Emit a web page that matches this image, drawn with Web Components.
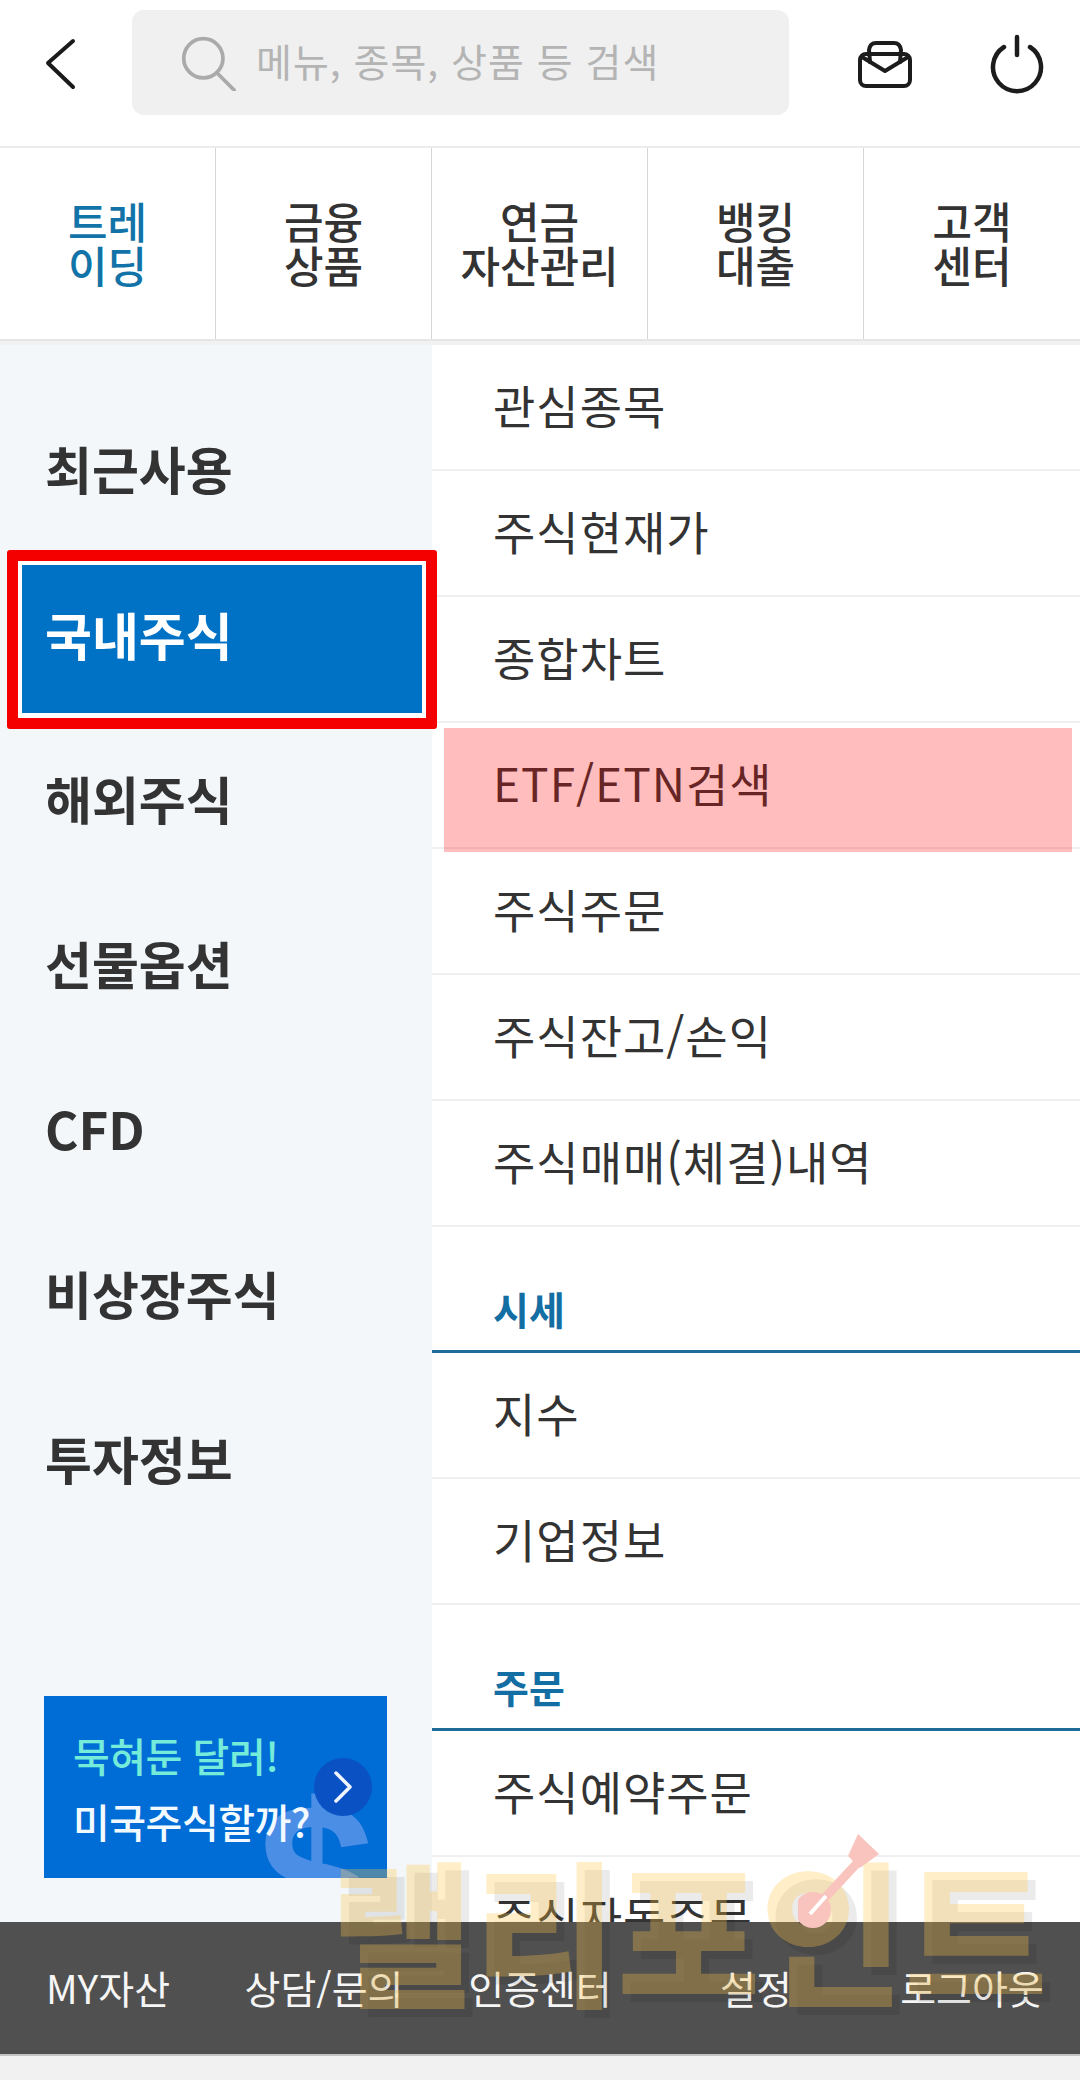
<!DOCTYPE html>
<html lang="ko">
<head>
<meta charset="utf-8">
<title>메뉴</title>
<style>
  html, body { margin: 0; background: #fff; }
  body { font-family: "Noto Sans CJK KR", "Noto Sans", sans-serif; color: #333; }
</style>
</head>
<body>
<menu-page></menu-page>

<script>
class TopHeader extends HTMLElement {
  constructor() {
    super();
    this.attachShadow({ mode: "open" });
    this.shadowRoot.innerHTML = /* html */`
    <style>
      :host { display: flex; align-items: flex-start; height: 146px; box-sizing: border-box; padding: 10px 0 0 40px; }
      svg { display: block; fill: none; stroke-linecap: round; stroke-linejoin: round; }
      .back { width: 40px; height: 60px; margin: 25px 52px 0 0; stroke: #1a1a1a; stroke-width: 4; }
      .search { width: 657px; height: 105px; flex: none; background: #f0f0f0; border-radius: 12px; display: flex; align-items: center; box-sizing: border-box; padding: 0 0 0 48px; color: #b4b4b4; font-size: 39px; letter-spacing: 1px; }
      .search span { position: relative; top: -3px; }
      .search svg { width: 56px; height: 56px; margin-right: 20px; stroke: #aaa; stroke-width: 4; }
      .mail { width: 60px; height: 60px; margin: 23px 0 0 65px; stroke: #1c1c1c; stroke-width: 4; }
      .power { width: 60px; height: 64px; margin: 21px 0 0 73px; stroke: #1c1c1c; stroke-width: 4.5; }
    </style>
    <svg class="back" viewBox="0 0 40 60"><path d="M33 6 L8 28 L33 52"/></svg>
    <div class="search">
      <svg viewBox="0 0 60 60"><circle cx="25" cy="25" r="21"/><path d="M40 41 L58 59"/></svg>
      <span>메뉴, 종목, 상품 등 검색</span>
    </div>
    <svg class="mail" viewBox="0 0 60 60"><rect x="6" y="21" width="50" height="32" rx="6"/><path d="M8 24 L31 38 L54 24"/><path d="M16 29 L15 17 Q16 10 22 10 L40 10 Q46 10 47 17 L46 29"/></svg>
    <svg class="power" viewBox="0 0 60 64"><path d="M17 16 A24 24 0 1 0 43 16"/><path d="M30 6 L30 24"/></svg>`;
  }
}

class TabBar extends HTMLElement {
  constructor() {
    super();
    this.attachShadow({ mode: "open" });
    this.shadowRoot.innerHTML = /* html */`
    <style>
      :host { display: grid; grid-template-columns: repeat(5, 1fr); height: 195px; box-sizing: border-box; border-top: 2px solid #ececec; border-bottom: 2px solid #e6e6e6; }
    </style>
    <slot></slot>`;
  }
}

class TabItem extends HTMLElement {
  constructor() {
    super();
    this.attachShadow({ mode: "open" });
    this.shadowRoot.innerHTML = /* html */`
    <style>
      :host { display: flex; align-items: center; justify-content: center; text-align: center; font-size: 43px; line-height: 44px; font-weight: 500; color: #333; border-right: 1px solid #d6d6d6; padding-bottom: 4px; }
      :host(:last-child) { border-right: 0; }
      :host([active]) { color: #1273a8; }
    </style>
    <div><slot></slot></div>`;
  }
}

class SideNav extends HTMLElement {
  constructor() {
    super();
    this.attachShadow({ mode: "open" });
    this.shadowRoot.innerHTML = /* html */`
    <style>
      :host { display: flex; flex-direction: column; width: 432px; flex: none; background: #f3f7fa; padding-top: 40px; box-sizing: border-box; }
      ::slotted(promo-banner) { margin: auto 0 44px 44px; }
    </style>
    <slot></slot>`;
  }
}

class SideItem extends HTMLElement {
  constructor() {
    super();
    this.attachShadow({ mode: "open" });
    this.shadowRoot.innerHTML = /* html */`
    <style>
      :host { display: block; height: 165px; flex: none; font-size: 51px; font-weight: 700; color: #333; }
      .box { height: 100%; box-sizing: border-box; padding-left: 45px; display: flex; align-items: center; }
      :host([active]) { color: #fff; }
      :host([active]) .box { margin: 0 10px 0 22px; height: 148px; position: relative; top: 15px; padding: 0 0 10px 23px; background: #0072c6; box-shadow: 0 0 0 5px #fff; }
    </style>
    <div class="box"><slot></slot></div>`;
  }
}

class PromoBanner extends HTMLElement {
  constructor() {
    super();
    this.attachShadow({ mode: "open" });
    this.shadowRoot.innerHTML = /* html */`
    <style>
      :host { display: block; position: relative; width: 343px; height: 182px; flex: none; overflow: hidden; background: #006cd6; box-sizing: border-box; padding: 26px 0 0 29px; font-weight: 500; }
      .dollar { position: absolute; left: 214px; top: 76px; font: 700 210px/210px "Liberation Sans", sans-serif; color: #4a8ee6; }
      .line { position: relative; font-size: 40px; line-height: 66px; white-space: nowrap; letter-spacing: -0.5px; }
      .mint { color: #74ecd9; }
      .white { color: #f2faff; }
      .go { position: absolute; left: 270px; top: 62px; width: 58px; height: 58px; border-radius: 50%; background: #0a52c4; display: flex; align-items: center; justify-content: center; }
      .go svg { width: 20px; height: 34px; fill: none; stroke: #f2f6ff; stroke-width: 3.5; stroke-linecap: round; stroke-linejoin: round; }
    </style>
    <span class="dollar">$</span>
    <div class="line mint"><slot name="top"></slot></div>
    <div class="line white"><slot name="bottom"></slot></div>
    <div class="go"><svg viewBox="0 0 20 34"><path d="M3 3 L17 17 L3 31"/></svg></div>`;
  }
}

class MenuRow extends HTMLElement {
  constructor() {
    super();
    this.attachShadow({ mode: "open" });
    this.shadowRoot.innerHTML = /* html */`
    <style>
      :host { display: flex; align-items: center; height: 126px; flex: none; box-sizing: border-box; padding: 0 0 6px 61px; border-bottom: 2px solid #efefef; font-size: 46px; color: #333; letter-spacing: 1px; }
    </style>
    <slot></slot>`;
  }
}

class MenuSection extends HTMLElement {
  constructor() {
    super();
    this.attachShadow({ mode: "open" });
    this.shadowRoot.innerHTML = /* html */`
    <style>
      :host { display: flex; align-items: flex-end; height: 126px; flex: none; box-sizing: border-box; padding: 0 0 20px 61px; border-bottom: 3px solid #1d6b98; font-size: 39px; line-height: 44px; font-weight: 700; color: #136ea3; }
    </style>
    <slot></slot>`;
  }
}

class MenuList extends HTMLElement {
  constructor() {
    super();
    this.attachShadow({ mode: "open" });
    this.shadowRoot.innerHTML = /* html */`
    <style>
      :host { display: flex; flex-direction: column; flex: 1; min-width: 0; overflow: hidden; }
    </style>
    <slot></slot>`;
  }
}

class BottomBar extends HTMLElement {
  constructor() {
    super();
    this.attachShadow({ mode: "open" });
    this.shadowRoot.innerHTML = /* html */`
    <style>
      :host { display: grid; grid-template-columns: repeat(5, 1fr); height: 134px; box-sizing: border-box; background: #505050; align-items: center; justify-items: center; color: #f6f6f6; font-size: 39px; border-bottom: 2px solid #c4c4c4; padding-bottom: 2px; }
    </style>
    <slot></slot>`;
  }
}

class WaterMark extends HTMLElement {
  constructor() {
    super();
    this.attachShadow({ mode: "open" });
    this.shadowRoot.innerHTML = /* html */`
    <style>
      :host { display: block; position: absolute; left: 330px; top: 1838px; width: 740px; height: 190px; pointer-events: none; }
      .text { font-size: 156px; line-height: 176px; font-weight: 900; white-space: nowrap; color: rgba(255, 200, 70, .3); text-shadow: 8px 8px 0 rgba(0, 0, 0, .08); }
      svg { position: absolute; left: 468px; top: -4px; width: 110px; height: 100px; fill: none; }
    </style>
    <div class="text">랠리포인트</div>
    <svg viewBox="0 0 110 100">
      <circle cx="15" cy="76" r="18" fill="#f9c4bd"/>
      <path d="M10 82 L62 26" stroke="#f9c4bd" stroke-width="9"/>
      <path d="M60 0 L81 20 L62 34 L50 22 Z" fill="#f9c4bd"/>
      <path d="M12 80 L28 62" stroke="#fff" stroke-width="4"/>
    </svg>`;
  }
}

class MenuPage extends HTMLElement {
  constructor() {
    super();
    this.attachShadow({ mode: "open" });
    this.shadowRoot.innerHTML = /* html */`
    <style>
      :host { display: flex; flex-direction: column; position: relative; width: 1080px; height: 2080px; overflow: hidden; background: #f1f1f1; }
      .main { display: flex; height: 1577px; margin-top: 4px; flex: none; background: #fff; overflow: hidden; }
      .top-area { background: #fff; }
      .pink { position: absolute; left: 444px; top: 728px; width: 628px; height: 124px; background: rgba(255, 0, 0, .26); }
      .red { position: absolute; left: 7px; top: 550px; width: 430px; height: 179px; box-sizing: border-box; border: 11px solid #f50000; border-radius: 3px; }
    </style>
    <div class="top-area">
      <top-header></top-header>
      <tab-bar>
        <tab-item active>트레<br>이딩</tab-item>
        <tab-item>금융<br>상품</tab-item>
        <tab-item>연금<br>자산관리</tab-item>
        <tab-item>뱅킹<br>대출</tab-item>
        <tab-item>고객<br>센터</tab-item>
      </tab-bar>
    </div>
    <div class="main">
      <side-nav>
        <side-item>최근사용</side-item>
        <side-item active>국내주식</side-item>
        <side-item>해외주식</side-item>
        <side-item>선물옵션</side-item>
        <side-item>CFD</side-item>
        <side-item>비상장주식</side-item>
        <side-item>투자정보</side-item>
        <promo-banner>
          <span slot="top">묵혀둔 달러!</span>
          <span slot="bottom">미국주식할까?</span>
        </promo-banner>
      </side-nav>
      <menu-list>
        <menu-row>관심종목</menu-row>
        <menu-row>주식현재가</menu-row>
        <menu-row>종합차트</menu-row>
        <menu-row>ETF/ETN검색</menu-row>
        <menu-row>주식주문</menu-row>
        <menu-row>주식잔고/손익</menu-row>
        <menu-row>주식매매(체결)내역</menu-row>
        <menu-section>시세</menu-section>
        <menu-row>지수</menu-row>
        <menu-row>기업정보</menu-row>
        <menu-section>주문</menu-section>
        <menu-row>주식예약주문</menu-row>
        <menu-row>주식자동주문</menu-row>
      </menu-list>
    </div>
    <bottom-bar>
      <span>MY자산</span>
      <span>상담/문의</span>
      <span>인증센터</span>
      <span>설정</span>
      <span>로그아웃</span>
    </bottom-bar>
    <div class="pink"></div>
    <div class="red"></div>
    <water-mark></water-mark>`;
  }
}

customElements.define("top-header", TopHeader);
customElements.define("tab-bar", TabBar);
customElements.define("tab-item", TabItem);
customElements.define("side-nav", SideNav);
customElements.define("side-item", SideItem);
customElements.define("promo-banner", PromoBanner);
customElements.define("menu-row", MenuRow);
customElements.define("menu-section", MenuSection);
customElements.define("menu-list", MenuList);
customElements.define("bottom-bar", BottomBar);
customElements.define("water-mark", WaterMark);
customElements.define("menu-page", MenuPage);
</script>
</body>
</html>
